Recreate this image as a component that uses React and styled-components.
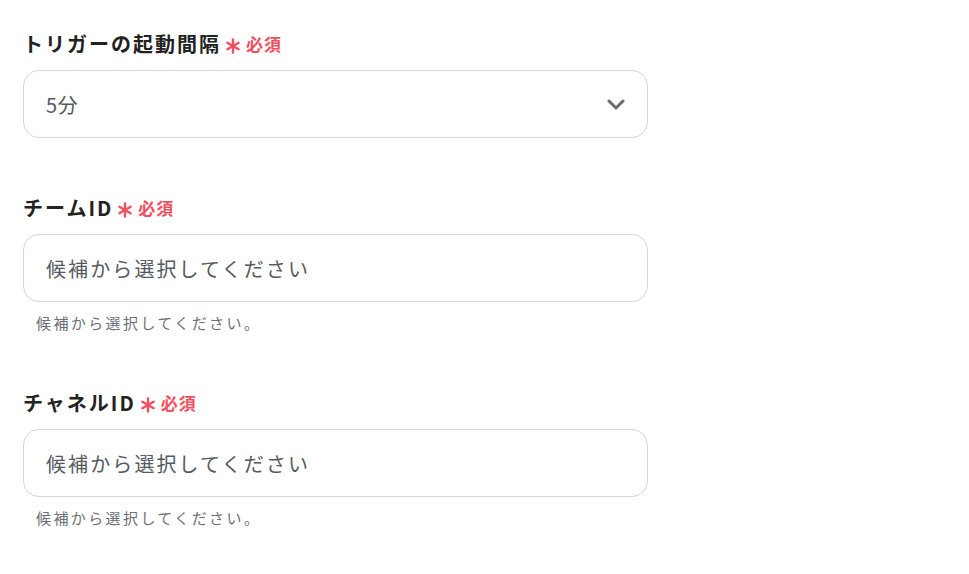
import React from 'react';
import styled, { createGlobalStyle } from 'styled-components';

const GlobalStyle = createGlobalStyle`
  html, body {
    margin: 0;
    padding: 0;
    background: #fff;
  }
  body {
    font-family: "Noto Sans CJK JP", "Noto Sans", sans-serif;
    color: #222;
  }
`;

const Form = styled.div`
  display: flex;
  flex-direction: column;
  gap: 56px;
  padding: 30px 0 0 23px;
  width: 625px;
`;

const Field = styled.div`
  display: flex;
  flex-direction: column;
`;

const Label = styled.div`
  display: flex;
  align-items: center;
  height: 26px;
  margin-bottom: 14px;
  font-size: 20px;
  font-weight: 700;
  letter-spacing: 2px;
  color: #222;
`;

const Asterisk = styled.span`
  display: inline-flex;
  margin: 5px 5px 0 4px;
`;

const Required = styled.span`
  font-size: 17px;
  font-weight: 700;
  color: #f24f5f;
  letter-spacing: 1px;
`;

const Box = styled.div`
  box-sizing: border-box;
  height: 68px;
  border: 1px solid #d3d6dc;
  border-radius: 16px;
  display: flex;
  align-items: center;
  justify-content: space-between;
  padding: 0 22px 0 22px;
  font-size: 20px;
  letter-spacing: ${(p) => (p.$spaced ? '2.1px' : '0.5px')};
  color: #555a60;
`;

const Help = styled.div`
  margin: 10px 0 0 13px;
  font-size: 15px;
  letter-spacing: 2.4px;
  color: #6b7078;
`;

const Star = () => (
  <Asterisk>
    <svg width="16" height="16" viewBox="0 0 16 16">
      <g stroke="#f24f5f" strokeWidth="2.4" strokeLinecap="round">
        <line x1="8" y1="1.5" x2="8" y2="14.5" />
        <line x1="2.4" y1="4.75" x2="13.6" y2="11.25" />
        <line x1="2.4" y1="11.25" x2="13.6" y2="4.75" />
      </g>
    </svg>
  </Asterisk>
);

const Chevron = () => (
  <svg width="18" height="11" viewBox="0 0 18 11">
    <polyline points="2,2 9,9 16,2" fill="none" stroke="#6b6b6b" strokeWidth="3" strokeLinecap="round" strokeLinejoin="round" />
  </svg>
);

const fields = [
  { label: 'チームID' },
  { label: 'チャネルID' },
];

export default function App() {
  return (
    <>
      <GlobalStyle />
      <Form>
        <Field>
          <Label>
            トリガーの起動間隔<Star /><Required>必須</Required>
          </Label>
          <Box>
            <span>5分</span>
            <Chevron />
          </Box>
        </Field>
        {fields.map((f) => (
          <Field key={f.label}>
            <Label>
              {f.label}<Star /><Required>必須</Required>
            </Label>
            <Box $spaced>候補から選択してください</Box>
            <Help>候補から選択してください。</Help>
          </Field>
        ))}
      </Form>
    </>
  );
}
